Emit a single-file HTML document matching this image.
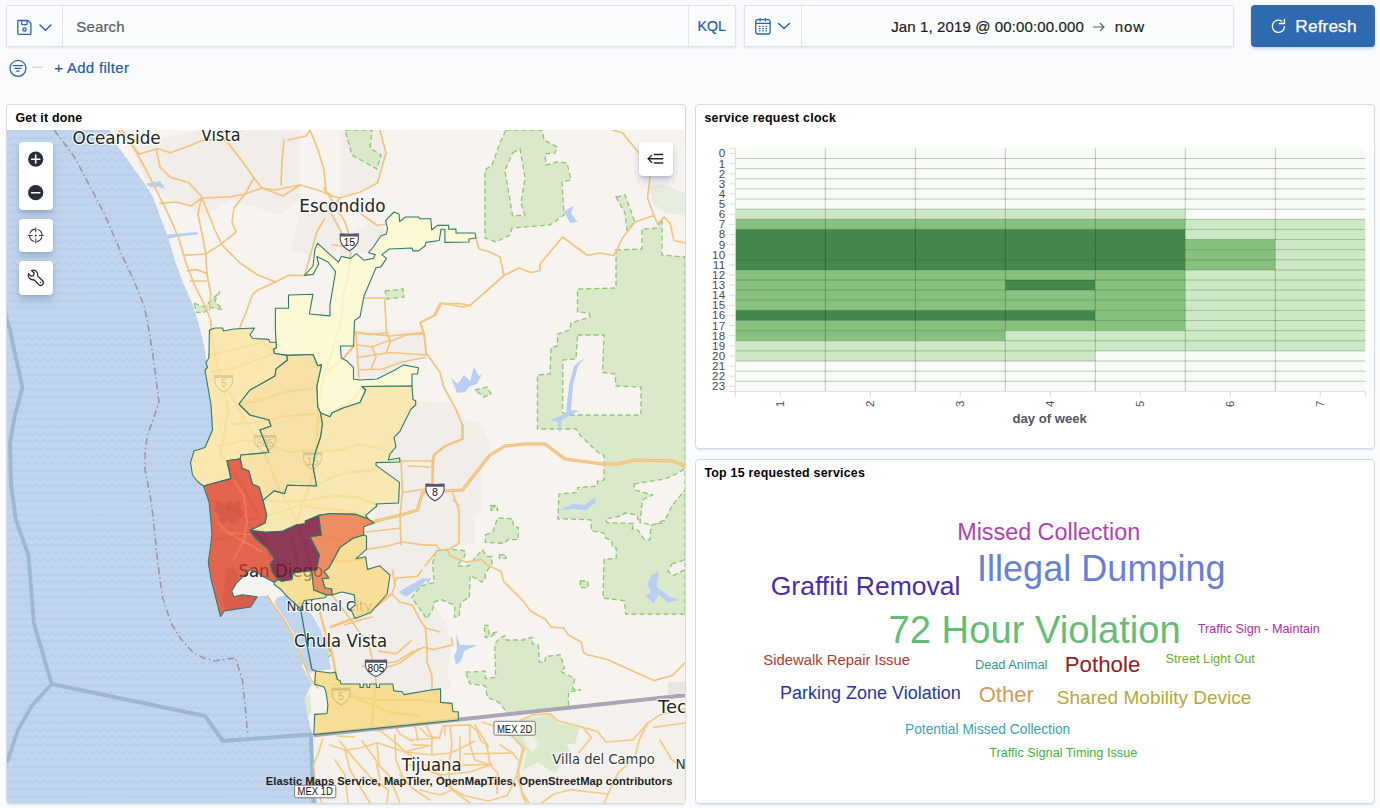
<!DOCTYPE html>
<html lang="en">
<head>
<meta charset="utf-8">
<title>Get it done - Dashboard</title>
<style>
*{box-sizing:border-box;margin:0;padding:0}
html,body{width:1380px;height:808px;overflow:hidden;background:#fafbfd;font-family:"Liberation Sans",Arial,sans-serif;color:#343741}
.abs{position:absolute}
.box{position:absolute;background:#fbfcfd;border:1px solid #dfe3ec;box-shadow:0 1px 2px rgba(152,162,179,.25)}
.panel{position:absolute;background:#fff;border:1px solid #d3dae6;border-radius:4px;box-shadow:0 2px 2px -1px rgba(152,162,179,.3)}
.ptitle{position:absolute;left:8.4px;top:5.6px;font-size:12.4px;font-weight:700;color:#000;white-space:nowrap}
.blue{color:#1a5ca8}
.heat{position:absolute;left:696px;top:104px}
.heat .yt{font-size:11.6px;fill:#444a59;letter-spacing:.3px}
.heat .xt{font-size:11.4px;fill:#4a5060}
.heat .xl{font-size:13.1px;font-weight:700;fill:#4e5568}
.cloud span{position:absolute;white-space:nowrap;line-height:1;font-family:"Liberation Sans",Arial,sans-serif}
.mapbtn{position:absolute;background:#fff;border-radius:4px;box-shadow:0 6px 12px -1px rgba(110,125,160,.28),0 3px 5px -1px rgba(110,125,160,.25),0 1px 2px rgba(110,125,160,.2)}
</style>
</head>
<body>

<!-- query bar -->
<div class="box" style="left:6px;top:5px;width:730px;height:42px"></div>
<div class="abs" style="left:62px;top:6px;width:1px;height:40px;background:#e3e7ef"></div>
<div class="abs" style="left:688px;top:6px;width:1px;height:40px;background:#e3e7ef"></div>
<svg class="abs" style="left:16px;top:18px" width="38" height="18" viewBox="0 0 38 18" fill="none" stroke="#2a66ad" stroke-width="1.3">
<path d="M1.8 3.4a.9.9 0 0 1 .9-.9h9.2l3 3v9.9a.9.9 0 0 1-.9.9H2.7a.9.9 0 0 1-.9-.9z" stroke-linejoin="round"/>
<path d="M5.6 2.7v3a.9.9 0 0 0 .9.9h3.7a.9.9 0 0 0 .9-.9v-3"/>
<circle cx="8.5" cy="11.4" r="1.6"/>
<path d="M24 7l5.5 5.2L35 7" stroke-width="1.5" stroke-linecap="round" stroke-linejoin="round"/>
</svg>
<div class="abs" style="left:76.3px;top:17.7px;font-size:15px;letter-spacing:.14px;color:#555b66;white-space:nowrap;-webkit-text-stroke:.2px #555b66">Search</div>
<div class="abs blue" style="left:697.5px;top:17.9px;font-size:14.2px;letter-spacing:0;white-space:nowrap;-webkit-text-stroke:.2px #1a5ca8">KQL</div>
<!-- date picker -->
<div class="box" style="left:744px;top:5px;width:490px;height:42px"></div>
<div class="abs" style="left:801px;top:6px;width:1px;height:40px;background:#e3e7ef"></div>
<svg class="abs" style="left:754px;top:16px" width="40" height="20" viewBox="0 0 40 20" fill="none" stroke="#2a66ad" stroke-width="1.3">
<rect x="1.8" y="3.6" width="14.3" height="14.4" rx="1.9"/>
<path d="M1.8 7.4h14.3M6.1 2.3v2.6M11.5 2.3v2.6" stroke-linecap="round"/>
<path d="M4.9 10.4h1.6M8.2 10.4h1.6M11.5 10.4h1.6M4.9 12.6h1.6M8.2 12.6h1.6M11.5 12.6h1.6M4.9 14.8h1.6M8.2 14.8h1.6M11.5 14.8h1.6" stroke-width="1.2"/>
<path d="M24.5 7.5l5.5 5 5.5-5" stroke-width="1.5" stroke-linecap="round" stroke-linejoin="round"/>
</svg>
<div class="abs" style="left:891.2px;top:17.6px;font-size:15px;letter-spacing:.12px;color:#1a1c21;white-space:nowrap;-webkit-text-stroke:.2px #1a1c21">Jan 1, 2019 @ 00:00:00.000</div>
<svg class="abs" style="left:1092px;top:21px" width="14" height="12" viewBox="0 0 14 12" fill="none" stroke="#5a606b" stroke-width="1.2" stroke-linecap="round" stroke-linejoin="round"><path d="M1.5 6h10.5M8.3 2.3L12 6l-3.7 3.7"/></svg>
<div class="abs" style="left:1114.7px;top:17.6px;font-size:15px;letter-spacing:.91px;color:#1a1c21;white-space:nowrap;-webkit-text-stroke:.2px #1a1c21">now</div>
<!-- refresh -->
<div class="abs" style="left:1250.5px;top:5px;width:124.5px;height:42px;background:#2f69b0;border-radius:4px;box-shadow:0 2px 3px rgba(47,105,176,.25)"></div>
<svg class="abs" style="left:1270px;top:17px" width="18" height="18" viewBox="0 0 18 18" fill="none" stroke="#fff" stroke-width="1.35" stroke-linecap="round" stroke-linejoin="round"><path d="M11.81 4.24A6.1 6.1 0 1 0 14.49 9.73"/><path d="M14.45 2.3V6.5H9.4"/></svg>
<div class="abs" style="left:1295.3px;top:15.6px;font-size:17.4px;letter-spacing:.06px;color:#fff;white-space:nowrap;-webkit-text-stroke:.25px #fff">Refresh</div>
<!-- filter row -->
<svg class="abs" style="left:8px;top:58px" width="40" height="20" viewBox="0 0 40 20" fill="none" stroke="#2a66ad" stroke-width="1.3" stroke-linecap="round"><circle cx="10" cy="10.3" r="8"/><path d="M5.3 7.6h9.4M7 10.4h6M8.8 13.2h2.4"/><path d="M25 9.3h9" stroke="#d6dae2" stroke-width="1.4"/></svg>
<div class="abs blue" style="left:54.2px;top:58.8px;font-size:15px;letter-spacing:.31px;white-space:nowrap;-webkit-text-stroke:.2px #1a5ca8">+ Add filter</div>

<!-- panels -->
<div class="panel" style="left:6px;top:104px;width:680px;height:700px"><div class="ptitle" style="letter-spacing:.2px">Get it done</div></div>
<div class="panel" style="left:695px;top:104px;width:680px;height:345px"><div class="ptitle" style="letter-spacing:.27px">service request clock</div></div>
<div class="panel" style="left:695px;top:459px;width:680px;height:345px"><div class="ptitle" style="letter-spacing:.24px">Top 15 requested services</div></div>

<svg class="abs" style="left:7px;top:130px" width="678" height="673" viewBox="7 130 678 673" font-family="'DejaVu Sans','Liberation Sans',sans-serif">
<defs>
<pattern id="wv" width="7.55" height="7.4" patternUnits="userSpaceOnUse" patternTransform="translate(2.3 1.2)"><path d="M-3.775 2.2q3.775 4.6 7.55 0q3.775 4.6 7.55 0" fill="none" stroke="#b5cbe7" stroke-width="1.4"/></pattern>
</defs>
<rect x="7" y="130" width="678" height="673" fill="#f7f4f0"/>
<polygon points="314.0,735.0 685.0,695.0 685.0,803.0 318.0,803.0" fill="#f4f1ed"/>
<polygon points="340.0,130.0 380.0,130.0 386.0,153.0 378.0,183.0 340.0,198.0 300.0,215.0 290.0,250.0 330.0,262.0 345.0,235.0 372.0,222.0 386.0,230.0 380.0,250.0 340.0,258.0" fill="#f1eeea"/>
<polygon points="356.0,330.0 425.0,330.0 426.0,355.0 402.0,365.0 380.0,377.0 356.0,377.0" fill="#f1eeea"/>
<polygon points="415.0,402.0 440.0,401.0 457.0,407.0 465.0,420.0 480.0,422.0 492.0,447.0 482.0,470.0 482.0,512.0 475.0,515.0 475.0,545.0 459.0,545.0 440.0,560.0 425.0,590.0 400.0,600.0 388.0,594.0 390.0,574.0 366.0,556.0 366.0,536.0 364.0,527.0 374.0,523.0 376.0,504.0 398.0,503.0 399.0,482.0 376.0,465.0 400.0,462.0 400.0,458.0 388.0,460.0 396.0,447.0 394.0,437.0 400.0,431.0 411.0,409.0" fill="#f1eeea"/>
<polygon points="313.0,610.0 330.0,595.0 355.0,595.0 352.0,609.0 356.0,618.0 370.0,613.0 388.0,594.0 430.0,600.0 446.0,622.0 452.0,650.0 447.0,672.0 452.0,688.0 404.0,694.0 393.0,684.0 340.0,684.0 336.0,674.0 331.0,669.0 327.0,658.0 320.0,630.0" fill="#f1eeea"/>
<polygon points="200.0,130.0 300.0,130.0 300.0,200.0 280.0,215.0 230.0,200.0 205.0,215.0 150.0,190.0 130.0,145.0" fill="#f1eeea"/>
<polygon points="650.0,185.5 662.5,184.0 685.0,193.0 685.0,215.5 665.0,213.0 652.5,203.0" fill="#e6eddf"/>
<polygon points="304.0,697.0 310.0,694.0 311.5,712.0 308.0,717.0 304.5,706.0" fill="#dcebcf"/>
<polygon points="345.0,130.0 372.0,130.0 370.0,148.0 381.0,155.0 377.0,169.0 352.0,155.0" fill="#d9e9ca" stroke="#90c476" stroke-width="1.3" stroke-dasharray="5 3"/>
<polygon points="506.0,130.0 542.0,130.0 544.0,140.0 557.0,147.0 555.0,153.0 545.0,154.0 546.0,165.0 557.0,162.0 567.0,163.0 571.0,180.0 562.0,182.0 564.0,215.0 550.0,225.0 512.0,228.0 510.0,235.0 496.0,242.0 485.0,238.0 485.0,170.0 492.0,165.0 500.0,143.0" fill="#d9e9ca" stroke="#90c476" stroke-width="1.3" stroke-dasharray="5 3"/>
<polygon points="616.0,197.0 625.0,195.0 635.0,222.0 627.0,230.0 625.0,213.0" fill="#d9e9ca" stroke="#90c476" stroke-width="1.3" stroke-dasharray="5 3"/>
<polygon points="616.0,250.0 642.0,249.0 642.0,229.0 657.0,228.0 662.0,219.0 662.0,255.0 685.0,257.0 685.0,614.0 625.6,614.0 624.7,600.8 603.0,598.0 604.0,559.3 616.2,558.4 616.2,548.0 612.5,547.0 611.5,540.5 605.0,537.7 604.0,533.0 591.7,531.0 590.8,519.8 557.8,518.8 559.0,494.0 577.5,492.5 577.5,487.5 597.5,486.0 597.5,481.0 604.0,480.0 604.0,455.0 600.0,454.0 590.0,445.0 580.0,435.0 576.0,429.0 537.5,429.0 537.5,375.0 550.0,374.0 551.0,347.5 557.5,346.0 557.5,334.0 570.0,330.0 571.0,323.0 590.0,317.0 589.0,313.0 577.5,312.0 577.5,289.0 616.0,288.0" fill="#d9e9ca" stroke="#90c476" stroke-width="1.3" stroke-dasharray="5 3"/>
<polygon points="475.0,390.0 487.0,387.0 491.0,394.0 484.0,397.0" fill="#d9e9ca" stroke="#90c476" stroke-width="1.3" stroke-dasharray="5 3"/>
<polygon points="385.0,291.0 403.0,289.0 404.0,297.0 387.0,299.0" fill="#d9e9ca" stroke="#90c476" stroke-width="1.3" stroke-dasharray="5 3"/>
<polygon points="485.3,534.9 492.8,532.0 497.5,517.9 512.6,518.8 513.5,526.4 518.3,527.3 518.3,539.6 507.9,539.6 504.1,543.3 485.3,542.4" fill="#d9e9ca" stroke="#90c476" stroke-width="1.3" stroke-dasharray="5 3"/>
<polygon points="491.0,505.7 497.5,505.7 497.5,510.4" fill="#d9e9ca" stroke="#90c476" stroke-width="1.3" stroke-dasharray="5 3"/>
<polygon points="499.4,554.6 506.0,554.6 506.0,558.4 499.4,558.4" fill="#d9e9ca" stroke="#90c476" stroke-width="1.3" stroke-dasharray="5 3"/>
<polygon points="436.3,550.9 449.5,549.0 465.5,550.9 464.6,556.5 457.0,566.0 468.3,566.0 470.2,564.0 477.8,554.6 482.5,550.0 487.2,556.5 491.9,556.5 491.9,564.0 485.3,573.5 485.3,579.0 481.5,582.0 470.2,575.4 469.3,598.0 466.4,598.9 460.8,602.7 458.9,616.8 454.2,616.8 455.0,605.5 442.0,599.8 434.4,601.7 432.5,609.3 426.9,618.7 411.7,597.7 421.0,586.0 434.3,582.6 432.5,564.0" fill="#d9e9ca" stroke="#90c476" stroke-width="1.3" stroke-dasharray="5 3"/>
<polygon points="580.4,581.0 588.0,581.0 588.0,587.6 580.4,587.6" fill="#d9e9ca" stroke="#90c476" stroke-width="1.3" stroke-dasharray="5 3"/>
<polygon points="484.3,625.3 488.0,625.3 489.0,633.8 497.5,631.9 491.0,636.6 485.3,637.5" fill="#d9e9ca" stroke="#90c476" stroke-width="1.3" stroke-dasharray="5 3"/>
<polygon points="465.6,672.2 485.3,671.2 485.3,678.5 495.7,677.4 494.7,644.0 499.9,638.0 505.0,635.6 506.0,640.0 523.9,640.0 524.8,638.5 532.4,637.5 532.4,644.0 538.4,645.0 539.4,661.8 544.6,662.9 545.6,656.6 560.2,654.6 564.4,668.0 560.2,671.2 574.8,678.5 572.7,688.9 581.0,690.0 568.5,692.0 568.5,707.2 508.2,713.8 498.8,702.4 487.4,697.2 485.3,685.8 469.7,683.7" fill="#d9e9ca" stroke="#90c476" stroke-width="1.3" stroke-dasharray="5 3"/>
<polygon points="491.0,506.0 494.0,506.0 494.0,510.0 491.0,510.0" fill="#d9e9ca" stroke="#90c476" stroke-width="1.3" stroke-dasharray="5 3"/>
<polygon points="326.0,640.0 331.0,655.0 327.0,658.0" fill="#d9e9ca" stroke="#90c476" stroke-width="1.3" stroke-dasharray="5 3"/>
<polygon points="194.0,303.0 204.3,307.0 220.0,291.6 214.7,300.7 222.5,309.8 209.5,307.0 204.3,312.4 196.5,312.4" fill="#d9e9ca" stroke="#90c476" stroke-width="1.3" stroke-dasharray="5 3"/>
<polygon points="512.5,153.0 520.0,149.0 525.0,178.0 521.0,203.0 525.0,215.5 512.5,215.5 505.0,170.5" fill="#f7f4f0" stroke="#90c476" stroke-width="1.3" stroke-dasharray="5 3"/>
<polygon points="577.5,335.0 604.0,335.0 602.5,372.5 615.0,374.0 616.0,386.0 641.0,387.0 641.0,415.0 570.0,415.0 562.5,412.5 563.0,360.0 576.0,359.0" fill="#f7f4f0" stroke="#90c476" stroke-width="1.3" stroke-dasharray="5 3"/>
<polygon points="644.5,500.0 671.8,500.0 669.9,509.4 664.3,511.3 664.3,522.6 651.0,524.5 650.0,539.6 644.5,539.6 637.9,530.0 632.2,529.0 634.0,523.5 606.8,522.6 605.9,518.8 621.0,516.0 624.7,513.0 637.0,515.0 637.9,519.8 641.7,518.8" fill="#f7f4f0" stroke="#90c476" stroke-width="1.3" stroke-dasharray="5 3"/>
<polygon points="634.0,484.0 665.0,479.0 676.0,474.0 685.0,469.0 685.0,490.0 672.5,505.0 665.0,520.0 652.5,525.0 640.0,522.5 642.5,500.0 652.5,495.0 635.0,490.0" fill="#f7f4f0" stroke="#90c476" stroke-width="1.3" stroke-dasharray="5 3"/>
<polygon points="671.8,564.0 685.0,560.0 685.0,569.7 673.7,575.4 668.0,571.6" fill="#f7f4f0" stroke="#90c476" stroke-width="1.3" stroke-dasharray="5 3"/>
<polygon points="519.6,720.0 549.8,714.9 558.1,723.2 580.0,727.4 574.8,744.0 566.4,744.0 570.6,752.3 555.0,773.0 537.3,762.7 522.8,770.0 526.9,752.3 514.4,737.8" fill="#dbeacd"/>
<polygon points="522.0,738.0 530.0,734.0 540.0,744.0 532.0,752.0" fill="#f1efe8"/>
<polygon points="451.0,378.0 458.0,384.0 464.0,375.0 470.0,381.0 474.0,367.0 479.0,376.0 482.0,374.0 477.0,384.0 470.0,386.0 465.0,392.0 457.0,393.0" fill="#b7cff2"/>
<polygon points="585.0,357.5 578.0,366.0 573.0,385.0 571.0,410.0 580.0,411.0 572.0,414.0 562.0,420.0 560.0,435.0 558.0,422.0 550.0,420.0 558.0,417.0 566.0,413.0 569.0,385.0 574.0,366.0" fill="#b7cff2"/>
<polygon points="560.0,510.0 573.0,504.0 585.0,505.0 595.0,497.5 596.0,502.0 586.0,510.0 572.0,509.0" fill="#b7cff2"/>
<polygon points="563.7,211.7 573.7,205.5 571.0,213.0 577.5,221.7 570.0,223.0 566.0,215.5" fill="#b7cff2"/>
<polygon points="398.5,592.0 423.0,578.0 426.8,578.8 419.3,588.0 406.0,596.7" fill="#b7cff2"/>
<polygon points="456.0,633.8 459.9,645.0 477.8,645.0 464.6,650.7 461.0,661.0 456.0,665.0 454.0,656.0 457.0,650.0" fill="#b7cff2"/>
<polygon points="651.0,575.4 658.6,571.6 656.7,586.7 668.0,596.0 679.3,599.8 668.0,602.7 658.6,594.2 653.9,603.6 645.4,596.0 651.0,592.3 647.3,584.8" fill="#b7cff2"/>
<polygon points="145.8,183.8 160.0,181.0 165.3,189.0 158.0,186.5 150.0,187.0" fill="#b7cff2"/>
<polygon points="166.6,234.5 197.8,232.0 197.8,234.5 175.7,237.0 168.0,239.0" fill="#b7cff2"/>
<polygon points="425.0,579.0 431.0,578.0 428.0,584.0" fill="#b7cff2"/>
<polygon points="109.5,130.0 116.0,143.6 129.0,161.8 142.0,180.0 152.3,195.5 160.0,216.3 168.0,237.0 175.7,263.0 183.5,283.8 192.6,304.6 199.0,325.4 201.0,333.0 205.0,350.0 207.5,367.5 205.0,370.0 208.0,388.0 211.0,405.0 213.0,420.0 212.5,430.0 209.0,441.0 205.0,447.5 194.0,451.0 191.0,457.0 190.5,462.5 191.0,470.0 192.5,475.0 198.0,482.0 204.0,487.5 207.0,495.0 209.2,502.2 212.0,520.0 212.0,534.2 209.0,550.0 208.3,562.5 211.0,578.8 215.0,596.0 218.6,609.0 220.5,616.5 224.3,610.9 250.6,607.0 257.2,596.7 262.0,596.0 267.6,595.8 272.3,603.3 285.5,622.0 296.8,643.0 302.5,656.0 302.5,667.0 311.9,684.0 304.3,699.0 308.0,718.0 311.9,733.0 313.8,772.8 317.5,803.0 7.0,803.0 7.0,130.0" fill="#c1d5ee"/>
<polygon points="109.5,130.0 116.0,143.6 129.0,161.8 142.0,180.0 152.3,195.5 160.0,216.3 168.0,237.0 175.7,263.0 183.5,283.8 192.6,304.6 199.0,325.4 201.0,333.0 205.0,350.0 207.5,367.5 205.0,370.0 208.0,388.0 211.0,405.0 213.0,420.0 212.5,430.0 209.0,441.0 205.0,447.5 194.0,451.0 191.0,457.0 190.5,462.5 191.0,470.0 192.5,475.0 198.0,482.0 204.0,487.5 207.0,495.0 209.2,502.2 212.0,520.0 212.0,534.2 209.0,550.0 208.3,562.5 211.0,578.8 215.0,596.0 218.6,609.0 220.5,616.5 224.3,610.9 250.6,607.0 257.2,596.7 262.0,596.0 267.6,595.8 272.3,603.3 285.5,622.0 296.8,643.0 302.5,656.0 302.5,667.0 311.9,684.0 304.3,699.0 308.0,718.0 311.9,733.0 313.8,772.8 317.5,803.0 7.0,803.0 7.0,130.0" fill="url(#wv)"/>
<polygon points="277.0,597.5 285.5,594.9 298.0,606.0 311.9,614.6 320.4,629.7 325.0,643.0 328.8,658.0 330.7,669.3 315.6,671.0 310.0,673.0 304.3,665.5 298.7,643.0 287.4,622.0 274.2,603.0" fill="#c1d5ee"/>
<path d="M54.0 130.0 L64.0 143.0 L75.0 158.0 L90.0 186.4 L105.6 216.3 L121.0 252.7 L134.0 281.0 L144.5 307.0 L149.5 333.0 L154.0 362.5 L159.0 402.5 L153.0 420.0 L147.5 435.0 L145.0 452.0 L145.0 470.0 L151.0 500.0 L153.4 520.0 L157.0 555.7 L162.3 596.7 L171.2 623.4 L181.0 639.0 L192.6 652.0 L204.0 658.0 L214.0 660.9 L235.4 658.0 L239.0 669.0 L242.5 680.5 L245.0 705.0 L247.9 735.8" fill="none" stroke="#9d94a1" stroke-width="1.5" stroke-dasharray="7 3 1.5 3"/>
<path d="M3.0 300.0 L6.7 319.0 L10.0 330.0 L16.0 358.0 L22.5 387.5 L15.0 415.0 L10.0 442.5 L11.0 485.0 L16.0 520.0 L28.5 555.7 L33.9 623.4 L51.7 684.0 L32.0 705.5 L17.8 730.4 L7.0 762.5" fill="none" stroke="#9db8d3" stroke-width="3.8" stroke-linejoin="round"/>
<path d="M51.7 684.0 L205.0 716.0 L222.9 741.0 L311.0 734.5 L313.5 803.0" fill="none" stroke="#9db8d3" stroke-width="4" stroke-linejoin="round"/>
<path d="M122.0 130.0 L131.5 143.6 L144.5 167.0 L155.0 187.7 L168.0 213.7 L178.3 237.0 L186.0 263.0 L194.0 283.8 L204.3 304.6 L210.8 320.0 L211.5 338.0" fill="none" stroke="#f2c47f" stroke-width="1.7" stroke-linejoin="round" stroke-linecap="round"/>
<path d="M118.0 130.0 L139.4 154.0 L157.5 148.8 L170.5 152.7 L188.7 146.0 L204.3 139.7 L230.0 141.0 L240.0 131.0" fill="none" stroke="#f2c47f" stroke-width="1.7" stroke-linejoin="round" stroke-linecap="round"/>
<path d="M156.2 148.8 L160.0 167.0 L170.5 177.4 L188.7 182.5 L201.7 196.8 L208.0 213.0 L215.0 230.0 L222.0 245.0 L240.0 263.0 L258.0 275.0 L275.4 282.0 L288.5 275.4 L304.6 275.4 L316.8 232.0 L324.3 218.8" fill="none" stroke="#f2c47f" stroke-width="1.7" stroke-linejoin="round" stroke-linecap="round"/>
<path d="M160.0 203.3 L175.7 202.0 L191.3 206.0 L201.7 198.0 L230.0 196.8 L245.0 194.0 L262.0 188.0 L275.0 190.0 L300.0 185.0 L318.0 190.0 L332.0 196.0 L340.0 198.0" fill="none" stroke="#f2c47f" stroke-width="1.7" stroke-linejoin="round" stroke-linecap="round"/>
<path d="M222.0 135.0 L232.0 148.0 L245.0 165.0 L254.0 178.0 L262.0 188.0 L283.0 196.0 L300.0 185.0" fill="none" stroke="#f2c47f" stroke-width="1.7" stroke-linejoin="round" stroke-linecap="round"/>
<path d="M310.0 130.0 L318.0 150.0 L324.0 170.0 L326.0 192.0 L332.0 196.0" fill="none" stroke="#f2c47f" stroke-width="1.7" stroke-linejoin="round" stroke-linecap="round"/>
<path d="M254.0 178.0 L245.0 194.0 L234.0 208.0 L232.0 222.0 L236.0 232.0 L230.0 237.0 L220.0 244.9 L205.6 254.0 L183.5 255.3" fill="none" stroke="#f2c47f" stroke-width="1.7" stroke-linejoin="round" stroke-linecap="round"/>
<path d="M284.0 140.0 L282.0 160.0 L281.0 185.0" fill="none" stroke="#f2c47f" stroke-width="1.7" stroke-linejoin="round" stroke-linecap="round"/>
<path d="M288.0 140.0 L306.0 136.0 L310.0 130.0" fill="none" stroke="#f2c47f" stroke-width="1.7" stroke-linejoin="round" stroke-linecap="round"/>
<path d="M201.7 198.0 L197.8 213.7 L201.7 232.0 L205.6 252.7 L206.9 273.5 L210.8 294.0 L209.5 309.8" fill="none" stroke="#f2c47f" stroke-width="1.7" stroke-linejoin="round" stroke-linecap="round"/>
<path d="M187.4 270.9 L196.5 269.6 L206.9 273.5" fill="none" stroke="#f2c47f" stroke-width="1.7" stroke-linejoin="round" stroke-linecap="round"/>
<path d="M190.0 281.0 L206.9 281.0" fill="none" stroke="#f2c47f" stroke-width="1.7" stroke-linejoin="round" stroke-linecap="round"/>
<path d="M239.6 328.0 L245.0 315.0 L252.7 294.2 L258.0 290.0 L275.4 282.0" fill="none" stroke="#f2c47f" stroke-width="1.7" stroke-linejoin="round" stroke-linecap="round"/>
<path d="M380.0 130.0 L386.0 153.0 L377.5 183.0 L360.0 192.0 L340.0 198.0 L330.0 211.3 L341.3 232.0 L350.7 252.7 L348.8 275.4 L343.2 294.2 L341.3 320.6 L331.9 352.0" fill="none" stroke="#f2c47f" stroke-width="1.7" stroke-linejoin="round" stroke-linecap="round"/>
<path d="M324.0 188.0 L335.0 205.0 L345.0 222.0 L350.7 240.0" fill="none" stroke="#f2c47f" stroke-width="1.7" stroke-linejoin="round" stroke-linecap="round"/>
<path d="M361.0 214.0 L377.5 225.5 L386.0 224.0" fill="none" stroke="#f2c47f" stroke-width="1.7" stroke-linejoin="round" stroke-linecap="round"/>
<path d="M332.0 245.0 L343.0 246.0 L356.0 243.0" fill="none" stroke="#f2c47f" stroke-width="1.7" stroke-linejoin="round" stroke-linecap="round"/>
<path d="M364.0 298.0 L384.6 298.0 L386.5 331.9 L390.3 341.3 L386.5 352.0" fill="none" stroke="#f2c47f" stroke-width="1.7" stroke-linejoin="round" stroke-linecap="round"/>
<path d="M354.5 331.9 L369.6 334.7 L386.5 333.0" fill="none" stroke="#f2c47f" stroke-width="1.7" stroke-linejoin="round" stroke-linecap="round"/>
<path d="M390.3 341.3 L407.2 334.7 L424.2 333.8 L420.4 322.5 L435.5 315.0 L441.2 303.6 L460.0 303.6 L470.0 305.5 L504.0 275.5" fill="none" stroke="#f2c47f" stroke-width="1.7" stroke-linejoin="round" stroke-linecap="round"/>
<path d="M424.2 333.8 L426.0 352.0 L426.0 355.0" fill="none" stroke="#f2c47f" stroke-width="1.7" stroke-linejoin="round" stroke-linecap="round"/>
<path d="M476.0 238.0 L479.0 249.0 L490.0 252.0 L500.0 257.0 L504.0 275.5 L519.0 268.0 L531.0 272.5 L540.0 270.5 L540.0 264.0 L562.5 237.0 L587.5 255.5 L600.0 253.0 L614.0 255.5 L622.5 238.0 L635.0 222.0 L654.0 215.5 L657.5 224.0 L664.0 217.0 L670.0 223.0 L674.0 240.5 L685.0 243.0" fill="none" stroke="#f2c47f" stroke-width="1.7" stroke-linejoin="round" stroke-linecap="round"/>
<path d="M470.0 305.5 L462.5 307.0 L440.0 303.0 L434.0 315.5 L420.0 323.0 L422.5 330.0 L425.0 340.0 L426.0 352.5 L440.0 372.5 L444.0 387.5 L455.0 407.5 L462.5 425.0 L462.5 439.0 L445.0 446.0 L434.0 455.0 L432.5 485.0" fill="none" stroke="#f2c47f" stroke-width="1.7" stroke-linejoin="round" stroke-linecap="round"/>
<path d="M612.5 130.0 L622.5 133.0 L639.0 153.0 L650.0 177.0 L647.5 198.0 L654.0 215.5" fill="none" stroke="#f2c47f" stroke-width="1.7" stroke-linejoin="round" stroke-linecap="round"/>
<path d="M356.0 332.5 L390.0 336.0 L422.5 332.5" fill="none" stroke="#f2c47f" stroke-width="1.7" stroke-linejoin="round" stroke-linecap="round"/>
<path d="M357.5 345.0 L372.0 347.0 L390.0 340.0" fill="none" stroke="#f2c47f" stroke-width="1.7" stroke-linejoin="round" stroke-linecap="round"/>
<path d="M357.5 357.5 L390.0 352.5 L426.0 355.0" fill="none" stroke="#f2c47f" stroke-width="1.7" stroke-linejoin="round" stroke-linecap="round"/>
<path d="M359.0 370.0 L382.5 369.0 L402.0 362.0 L425.0 357.5" fill="none" stroke="#f2c47f" stroke-width="1.7" stroke-linejoin="round" stroke-linecap="round"/>
<path d="M356.0 332.5 L357.5 357.5 L359.0 377.5" fill="none" stroke="#f2c47f" stroke-width="1.7" stroke-linejoin="round" stroke-linecap="round"/>
<path d="M372.0 347.0 L376.0 357.0 L371.0 369.0" fill="none" stroke="#f2c47f" stroke-width="1.7" stroke-linejoin="round" stroke-linecap="round"/>
<path d="M401.0 460.0 L402.5 492.5 L400.0 515.0 L401.0 545.0" fill="none" stroke="#f2c47f" stroke-width="1.7" stroke-linejoin="round" stroke-linecap="round"/>
<path d="M401.0 461.0 L432.5 461.0" fill="none" stroke="#f2c47f" stroke-width="1.7" stroke-linejoin="round" stroke-linecap="round"/>
<path d="M408.0 466.0 L430.0 467.0" fill="none" stroke="#f2c47f" stroke-width="1.7" stroke-linejoin="round" stroke-linecap="round"/>
<path d="M402.5 492.5 L426.0 489.0 L444.0 491.0" fill="none" stroke="#f2c47f" stroke-width="1.7" stroke-linejoin="round" stroke-linecap="round"/>
<path d="M422.5 492.5 L417.5 510.0 L400.0 515.0 L372.5 522.5" fill="none" stroke="#f2c47f" stroke-width="1.7" stroke-linejoin="round" stroke-linecap="round"/>
<path d="M452.5 492.5 L459.0 510.0 L459.0 543.3 L447.6 550.0" fill="none" stroke="#f2c47f" stroke-width="1.7" stroke-linejoin="round" stroke-linecap="round"/>
<path d="M453.3 500.0 L458.9 505.7" fill="none" stroke="#f2c47f" stroke-width="1.7" stroke-linejoin="round" stroke-linecap="round"/>
<path d="M366.0 532.0 L385.0 530.0 L401.0 528.0" fill="none" stroke="#f2c47f" stroke-width="1.7" stroke-linejoin="round" stroke-linecap="round"/>
<path d="M374.0 523.0 L388.0 518.0 L401.0 515.0" fill="none" stroke="#f2c47f" stroke-width="1.7" stroke-linejoin="round" stroke-linecap="round"/>
<path d="M366.5 549.3 L388.0 546.0 L402.0 542.0 L425.0 545.2 L436.3 545.2 L440.0 550.0 L447.6 550.0 L449.5 555.6 L466.4 562.2 L481.5 559.3 L487.2 565.0 L501.3 571.6 L503.2 581.0 L523.0 600.8 L530.5 611.0 L545.6 619.6 L551.2 627.2 L563.5 628.0 L568.2 634.7 L581.4 642.2 L583.2 652.0 L587.2 654.6 L608.0 659.8 L633.0 671.2 L653.8 680.6 L672.5 675.4 L685.0 662.9" fill="none" stroke="#f2c47f" stroke-width="1.7" stroke-linejoin="round" stroke-linecap="round"/>
<path d="M425.0 566.0 L436.3 551.8" fill="none" stroke="#f2c47f" stroke-width="1.7" stroke-linejoin="round" stroke-linecap="round"/>
<path d="M392.5 570.0 L395.0 586.0 L391.7 594.0 L399.7 602.0 L412.6 605.4 L419.0 618.0 L425.5 628.0 L427.0 647.0 L427.0 661.7 L432.0 676.0 L432.0 689.0" fill="none" stroke="#f2c47f" stroke-width="1.7" stroke-linejoin="round" stroke-linecap="round"/>
<path d="M395.0 582.0 L396.5 578.0 L417.4 576.4 L422.0 570.0" fill="none" stroke="#f2c47f" stroke-width="1.7" stroke-linejoin="round" stroke-linecap="round"/>
<path d="M425.5 628.0 L440.0 632.0" fill="none" stroke="#f2c47f" stroke-width="1.7" stroke-linejoin="round" stroke-linecap="round"/>
<path d="M331.0 594.0 L345.0 612.0 L358.0 630.0 L369.8 648.0 L374.0 668.0 L376.2 683.5" fill="none" stroke="#f2c47f" stroke-width="1.7" stroke-linejoin="round" stroke-linecap="round"/>
<path d="M345.0 625.0 L360.0 620.0 L372.0 617.0" fill="none" stroke="#f2c47f" stroke-width="1.7" stroke-linejoin="round" stroke-linecap="round"/>
<path d="M378.8 651.2 L396.5 653.6 L411.0 640.8" fill="none" stroke="#f2c47f" stroke-width="1.7" stroke-linejoin="round" stroke-linecap="round"/>
<path d="M382.8 663.3 L396.5 661.7 L409.4 653.6 L423.9 647.2 L433.5 649.6 L452.8 644.8 L451.2 637.6" fill="none" stroke="#f2c47f" stroke-width="1.7" stroke-linejoin="round" stroke-linecap="round"/>
<path d="M386.9 667.3 L399.7 663.3 L419.0 648.8" fill="none" stroke="#f2c47f" stroke-width="1.7" stroke-linejoin="round" stroke-linecap="round"/>
<path d="M362.0 666.0 L372.0 668.0" fill="none" stroke="#f2c47f" stroke-width="1.7" stroke-linejoin="round" stroke-linecap="round"/>
<path d="M285.5 622.0 L296.8 643.0 L302.5 660.0 L311.0 680.0 L318.0 688.0" fill="none" stroke="#f2c47f" stroke-width="1.7" stroke-linejoin="round" stroke-linecap="round"/>
<path d="M267.6 595.8 L272.3 603.3 L285.5 622.0" fill="none" stroke="#f2c47f" stroke-width="1.7" stroke-linejoin="round" stroke-linecap="round"/>
<path d="M432.4 690.0 L440.0 700.0" fill="none" stroke="#f2c47f" stroke-width="1.7" stroke-linejoin="round" stroke-linecap="round"/>
<path d="M366.0 523.0 L380.0 520.0 L401.0 515.0 L417.5 510.0 L422.5 492.5 L432.5 491.0 L444.0 491.0 L462.5 490.0 L490.0 455.0 L505.0 446.0 L525.0 444.0 L545.0 444.0 L565.0 459.0 L602.5 464.0 L617.5 464.0 L635.0 460.0 L672.5 461.0 L685.0 466.0" fill="none" stroke="#efb96e" stroke-width="3" stroke-linejoin="round" stroke-linecap="round"/>
<path d="M366.0 523.0 L380.0 520.0 L401.0 515.0 L417.5 510.0 L422.5 492.5 L432.5 491.0 L444.0 491.0 L462.5 490.0 L490.0 455.0 L505.0 446.0 L525.0 444.0 L545.0 444.0 L565.0 459.0 L602.5 464.0 L617.5 464.0 L635.0 460.0 L672.5 461.0 L685.0 466.0" fill="none" stroke="#f7cf92" stroke-width="1.5" stroke-linejoin="round" stroke-linecap="round"/>
<path d="M391.7 594.0 L377.2 605.4 L354.7 618.0 L330.6 627.0" fill="none" stroke="#f2c47f" stroke-width="2.6" stroke-linejoin="round" stroke-linecap="round"/>
<path d="M319.3 610.0 L325.7 634.3 L332.2 653.6 L337.0 679.4" fill="none" stroke="#f2c47f" stroke-width="2.3" stroke-linejoin="round" stroke-linecap="round"/>
<path d="M432.5 485.0 L432.5 461.0 L434.0 455.0 L445.0 446.0 L462.5 439.0 L462.5 425.0" fill="none" stroke="#f2c47f" stroke-width="2.4" stroke-linejoin="round" stroke-linecap="round"/>
<path d="M211.0 330.0 L214.0 350.0 L218.0 370.0 L224.0 384.0 L232.0 398.0 L243.0 416.0 L252.0 432.0 L262.0 448.0 L270.0 466.0 L280.0 490.0 L292.0 510.0 L300.0 530.0 L306.0 548.0 L312.0 570.0" fill="none" stroke="#f2c47f" stroke-width="2.3" stroke-linejoin="round" stroke-linecap="round"/>
<path d="M224.0 384.0 L228.0 410.0 L224.0 435.0 L220.0 452.0 L232.0 470.0 L245.0 490.0 L258.0 515.0 L266.0 540.0 L270.0 560.0 L276.0 580.0" fill="none" stroke="#f2c47f" stroke-width="2.3" stroke-linejoin="round" stroke-linecap="round"/>
<path d="M331.9 352.0 L325.0 372.0 L320.0 395.0 L318.0 420.0 L316.0 450.0 L314.0 470.0 L308.0 490.0 L302.0 505.0 L298.0 520.0" fill="none" stroke="#f2c47f" stroke-width="2.3" stroke-linejoin="round" stroke-linecap="round"/>
<path d="M209.0 355.0 L240.0 348.0 L262.0 342.0 L275.0 352.0" fill="none" stroke="#f2c47f" stroke-width="2.3" stroke-linejoin="round" stroke-linecap="round"/>
<path d="M212.0 372.0 L235.0 368.0 L262.0 358.0 L280.0 350.0" fill="none" stroke="#f2c47f" stroke-width="2.3" stroke-linejoin="round" stroke-linecap="round"/>
<path d="M240.0 404.0 L262.0 400.0 L285.0 392.0 L312.0 388.0" fill="none" stroke="#f2c47f" stroke-width="2.3" stroke-linejoin="round" stroke-linecap="round"/>
<path d="M232.0 424.0 L260.0 422.0 L285.0 416.0 L314.0 414.0" fill="none" stroke="#f2c47f" stroke-width="2.3" stroke-linejoin="round" stroke-linecap="round"/>
<path d="M218.0 446.0 L245.0 440.0 L268.0 445.0 L290.0 452.0 L314.0 450.0" fill="none" stroke="#f2c47f" stroke-width="2.3" stroke-linejoin="round" stroke-linecap="round"/>
<path d="M263.0 500.0 L285.0 502.0 L310.0 500.0 L335.0 495.0 L360.0 498.0 L376.0 504.0" fill="none" stroke="#f2c47f" stroke-width="2.3" stroke-linejoin="round" stroke-linecap="round"/>
<path d="M316.0 452.0 L340.0 450.0 L360.0 444.0 L378.0 448.0 L392.0 452.0" fill="none" stroke="#f2c47f" stroke-width="2.3" stroke-linejoin="round" stroke-linecap="round"/>
<path d="M250.0 520.0 L280.0 512.0 L300.0 505.0 L318.0 508.0 L340.0 510.0 L366.0 515.0" fill="none" stroke="#f2c47f" stroke-width="2.3" stroke-linejoin="round" stroke-linecap="round"/>
<path d="M316.0 486.0 L330.0 478.0 L350.0 472.0 L376.0 470.0" fill="none" stroke="#f2c47f" stroke-width="2.3" stroke-linejoin="round" stroke-linecap="round"/>
<path d="M325.0 372.0 L340.0 362.0 L354.0 346.0" fill="none" stroke="#f2c47f" stroke-width="2.3" stroke-linejoin="round" stroke-linecap="round"/>
<path d="M318.0 420.0 L335.0 410.0 L352.0 400.0 L362.0 388.0" fill="none" stroke="#f2c47f" stroke-width="2.3" stroke-linejoin="round" stroke-linecap="round"/>
<path d="M212.0 500.0 L235.0 510.0 L250.0 525.0 L262.0 540.0 L272.0 556.0" fill="none" stroke="#f2c47f" stroke-width="2.3" stroke-linejoin="round" stroke-linecap="round"/>
<path d="M215.0 540.0 L240.0 535.0 L260.0 530.0" fill="none" stroke="#f2c47f" stroke-width="2.3" stroke-linejoin="round" stroke-linecap="round"/>
<path d="M292.0 535.0 L296.0 555.0 L298.0 572.0" fill="none" stroke="#f2c47f" stroke-width="2.3" stroke-linejoin="round" stroke-linecap="round"/>
<path d="M322.0 535.0 L340.0 540.0 L356.0 538.0" fill="none" stroke="#f2c47f" stroke-width="2.3" stroke-linejoin="round" stroke-linecap="round"/>
<path d="M330.0 560.0 L345.0 562.0 L366.0 558.0" fill="none" stroke="#f2c47f" stroke-width="2.3" stroke-linejoin="round" stroke-linecap="round"/>
<path d="M335.0 684.0 L360.0 700.0 L390.0 712.0 L420.0 716.0" fill="none" stroke="#f2c47f" stroke-width="2.3" stroke-linejoin="round" stroke-linecap="round"/>
<path d="M345.0 696.0 L380.0 700.0 L420.0 700.0 L440.0 702.0" fill="none" stroke="#f2c47f" stroke-width="2.3" stroke-linejoin="round" stroke-linecap="round"/>
<path d="M376.2 683.5 L374.0 700.0 L372.8 719.0 L371.0 728.0" fill="none" stroke="#f2c47f" stroke-width="2.3" stroke-linejoin="round" stroke-linecap="round"/>
<path d="M322.6 739.0 L318.8 752.0 L313.5 765.0 L316.0 785.0 L322.0 803.0" fill="none" stroke="#f4cb86" stroke-width="1.7" stroke-linejoin="round" stroke-linecap="round"/>
<path d="M337.7 736.0 L354.6 737.0" fill="none" stroke="#f4cb86" stroke-width="1.7" stroke-linejoin="round" stroke-linecap="round"/>
<path d="M339.6 741.0 L356.5 761.6 L371.6 778.5 L388.5 790.0 L386.7 803.0" fill="none" stroke="#f4cb86" stroke-width="1.7" stroke-linejoin="round" stroke-linecap="round"/>
<path d="M377.2 742.7 L388.5 746.5 L405.5 752.0 L431.9 755.0 L450.7 753.0 L460.0 748.4 L475.0 741.0" fill="none" stroke="#f4cb86" stroke-width="1.7" stroke-linejoin="round" stroke-linecap="round"/>
<path d="M381.0 731.4 L398.0 744.6 L405.5 752.0 L420.0 762.0 L440.0 775.0 L452.0 790.0 L470.0 803.0" fill="none" stroke="#f4cb86" stroke-width="1.7" stroke-linejoin="round" stroke-linecap="round"/>
<path d="M409.3 740.0 L439.4 738.0 L443.0 725.8 L469.6 724.9 L477.0 730.5 L480.9 740.9 L486.5 744.6 L488.4 754.0 L490.0 765.0 L497.8 773.0 L496.9 793.6" fill="none" stroke="#f4cb86" stroke-width="1.7" stroke-linejoin="round" stroke-linecap="round"/>
<path d="M463.9 754.0 L512.9 753.0" fill="none" stroke="#f4cb86" stroke-width="1.7" stroke-linejoin="round" stroke-linecap="round"/>
<path d="M377.2 744.6 L379.0 765.4 L388.5 774.8 L394.0 788.0 L400.0 803.0" fill="none" stroke="#f4cb86" stroke-width="1.7" stroke-linejoin="round" stroke-linecap="round"/>
<path d="M512.9 737.0 L524.2 748.4 L518.5 771.0 L522.3 795.5 L526.0 803.0" fill="none" stroke="#f4cb86" stroke-width="1.7" stroke-linejoin="round" stroke-linecap="round"/>
<path d="M450.7 788.0 L463.9 795.5 L488.4 801.0 L507.2 795.5 L511.0 788.0 L518.5 771.0" fill="none" stroke="#f4cb86" stroke-width="1.7" stroke-linejoin="round" stroke-linecap="round"/>
<path d="M460.0 737.0 L460.0 765.4 L492.0 764.4" fill="none" stroke="#f4cb86" stroke-width="1.7" stroke-linejoin="round" stroke-linecap="round"/>
<path d="M431.9 737.0 L431.9 754.0" fill="none" stroke="#f4cb86" stroke-width="1.7" stroke-linejoin="round" stroke-linecap="round"/>
<path d="M413.0 744.6 L430.0 745.6" fill="none" stroke="#f4cb86" stroke-width="1.7" stroke-linejoin="round" stroke-linecap="round"/>
<path d="M445.0 725.8 L445.0 735.0" fill="none" stroke="#f4cb86" stroke-width="1.7" stroke-linejoin="round" stroke-linecap="round"/>
<path d="M475.0 724.9 L488.4 746.5" fill="none" stroke="#f4cb86" stroke-width="1.7" stroke-linejoin="round" stroke-linecap="round"/>
<path d="M392.0 722.0 L400.0 734.0 L412.0 741.0" fill="none" stroke="#f4cb86" stroke-width="1.7" stroke-linejoin="round" stroke-linecap="round"/>
<path d="M420.0 728.0 L428.0 736.0 L440.0 738.0" fill="none" stroke="#f4cb86" stroke-width="1.7" stroke-linejoin="round" stroke-linecap="round"/>
<path d="M362.0 741.0 L376.0 760.0 L380.0 780.0" fill="none" stroke="#f4cb86" stroke-width="1.7" stroke-linejoin="round" stroke-linecap="round"/>
<path d="M440.0 775.0 L470.0 772.0 L490.0 765.0" fill="none" stroke="#f4cb86" stroke-width="1.7" stroke-linejoin="round" stroke-linecap="round"/>
<path d="M400.0 775.0 L412.0 788.0 L430.0 800.0" fill="none" stroke="#f4cb86" stroke-width="1.7" stroke-linejoin="round" stroke-linecap="round"/>
<path d="M520.7 720.0 L533.0 714.9 L549.8 713.8 L558.0 721.0 L583.0 727.4 L597.6 731.5 L606.0 742.0 L633.0 739.8 L647.5 723.2 L660.0 714.9 L685.0 708.6" fill="none" stroke="#f4cb86" stroke-width="1.7" stroke-linejoin="round" stroke-linecap="round"/>
<path d="M583.0 727.4 L591.4 737.8 L579.0 752.3" fill="none" stroke="#f4cb86" stroke-width="1.7" stroke-linejoin="round" stroke-linecap="round"/>
<path d="M647.5 723.2 L639.2 739.8 L635.0 756.5 L618.4 773.0 L608.0 794.0 L604.0 803.0" fill="none" stroke="#f4cb86" stroke-width="1.7" stroke-linejoin="round" stroke-linecap="round"/>
<path d="M685.0 723.0 L653.8 727.4" fill="none" stroke="#f4cb86" stroke-width="1.7" stroke-linejoin="round" stroke-linecap="round"/>
<path d="M512.4 735.7 L522.8 748.0 L516.5 775.0 L522.8 794.0 L529.0 803.0" fill="none" stroke="#f4cb86" stroke-width="1.7" stroke-linejoin="round" stroke-linecap="round"/>
<path d="M608.0 794.0 L570.6 789.8 L554.0 794.0 L541.5 803.0" fill="none" stroke="#f4cb86" stroke-width="1.7" stroke-linejoin="round" stroke-linecap="round"/>
<path d="M494.0 722.0 L512.4 735.7" fill="none" stroke="#f4cb86" stroke-width="1.7" stroke-linejoin="round" stroke-linecap="round"/>
<path d="M660.0 740.0 L672.0 760.0 L685.0 770.0" fill="none" stroke="#f4cb86" stroke-width="1.7" stroke-linejoin="round" stroke-linecap="round"/>
<path d="M330.0 745.0 L345.0 750.0 L360.0 748.0 L377.0 743.0" fill="none" stroke="#f4cb86" stroke-width="1.7" stroke-linejoin="round" stroke-linecap="round"/>
<path d="M345.0 750.0 L350.0 770.0 L362.0 790.0 L370.0 803.0" fill="none" stroke="#f4cb86" stroke-width="1.7" stroke-linejoin="round" stroke-linecap="round"/>
<path d="M395.0 735.0 L396.0 760.0 L404.0 780.0" fill="none" stroke="#f4cb86" stroke-width="1.7" stroke-linejoin="round" stroke-linecap="round"/>
<path d="M404.0 752.0 L420.0 748.0 L431.9 745.0" fill="none" stroke="#f4cb86" stroke-width="1.7" stroke-linejoin="round" stroke-linecap="round"/>
<path d="M415.0 725.0 L418.0 740.0" fill="none" stroke="#f4cb86" stroke-width="1.7" stroke-linejoin="round" stroke-linecap="round"/>
<path d="M425.0 723.0 L431.9 737.0" fill="none" stroke="#f4cb86" stroke-width="1.7" stroke-linejoin="round" stroke-linecap="round"/>
<path d="M450.0 726.0 L452.0 745.0 L450.7 753.0 L448.0 770.0 L452.0 790.0" fill="none" stroke="#f4cb86" stroke-width="1.7" stroke-linejoin="round" stroke-linecap="round"/>
<path d="M469.6 724.9 L470.0 745.0 L475.0 760.0 L490.0 765.0" fill="none" stroke="#f4cb86" stroke-width="1.7" stroke-linejoin="round" stroke-linecap="round"/>
<path d="M440.0 760.0 L460.0 765.4" fill="none" stroke="#f4cb86" stroke-width="1.7" stroke-linejoin="round" stroke-linecap="round"/>
<path d="M410.0 765.0 L425.0 770.0 L440.0 775.0" fill="none" stroke="#f4cb86" stroke-width="1.7" stroke-linejoin="round" stroke-linecap="round"/>
<path d="M470.0 780.0 L485.0 785.0 L497.0 783.0" fill="none" stroke="#f4cb86" stroke-width="1.7" stroke-linejoin="round" stroke-linecap="round"/>
<path d="M335.0 760.0 L345.0 775.0 L348.0 803.0" fill="none" stroke="#f4cb86" stroke-width="1.7" stroke-linejoin="round" stroke-linecap="round"/>
<path d="M482.0 722.0 L500.0 728.0 L512.9 737.0" fill="none" stroke="#f4cb86" stroke-width="1.7" stroke-linejoin="round" stroke-linecap="round"/>
<path d="M500.0 745.0 L512.9 753.0 L518.0 760.0" fill="none" stroke="#f4cb86" stroke-width="1.7" stroke-linejoin="round" stroke-linecap="round"/>
<path d="M420.0 790.0 L440.0 795.0 L452.0 790.0" fill="none" stroke="#f4cb86" stroke-width="1.7" stroke-linejoin="round" stroke-linecap="round"/>
<path d="M365.0 728.0 L381.0 731.4 L392.0 722.0" fill="none" stroke="#f4cb86" stroke-width="1.7" stroke-linejoin="round" stroke-linecap="round"/>
<path d="M313.8 735.2L685 695.2" stroke="#a9a4b6" stroke-width="4" fill="none"/>
<rect x="668" y="682" width="17" height="12" fill="#e9e6e2"/>
<text x="72.5" y="144.3" font-size="18" textLength="88.2" lengthAdjust="spacingAndGlyphs" fill="#222" stroke="#fff" stroke-width="2.6" stroke-linejoin="round" paint-order="stroke" stroke-opacity=".9">Oceanside</text>
<text x="201.0" y="140.5" font-size="18" textLength="39.5" lengthAdjust="spacingAndGlyphs" fill="#222" stroke="#fff" stroke-width="2.6" stroke-linejoin="round" paint-order="stroke" stroke-opacity=".9">Vista</text>
<text x="299.3" y="211.7" font-size="18" textLength="86.3" lengthAdjust="spacingAndGlyphs" fill="#222" stroke="#fff" stroke-width="2.6" stroke-linejoin="round" paint-order="stroke" stroke-opacity=".9">Escondido</text>
<text x="238.4" y="576.6" font-size="18" textLength="84.8" lengthAdjust="spacingAndGlyphs" fill="#2a2a2a" stroke="#fff" stroke-width="2" stroke-opacity=".45" paint-order="stroke">San Diego</text>
<text x="286.4" y="610.9" font-size="13.8" textLength="85.8" lengthAdjust="spacingAndGlyphs" fill="#333" stroke="#fff" stroke-width="2.6" stroke-linejoin="round" paint-order="stroke" stroke-opacity=".9">National City</text>
<text x="294.0" y="646.7" font-size="18" textLength="93.2" lengthAdjust="spacingAndGlyphs" fill="#222" stroke="#fff" stroke-width="2.6" stroke-linejoin="round" paint-order="stroke" stroke-opacity=".9">Chula Vista</text>
<text x="401.7" y="771.0" font-size="18" textLength="59.9" lengthAdjust="spacingAndGlyphs" fill="#222" stroke="#fff" stroke-width="2.6" stroke-linejoin="round" paint-order="stroke" stroke-opacity=".9">Tijuana</text>
<text x="552.3" y="763.8" font-size="13.7" textLength="102.5" lengthAdjust="spacingAndGlyphs" fill="#333" stroke="#fff" stroke-width="2.6" stroke-linejoin="round" paint-order="stroke" stroke-opacity=".9">Villa del Campo</text>
<text x="658" y="713.2" font-size="18" fill="#222" stroke="#fff" stroke-width="2.6" stroke-linejoin="round" paint-order="stroke" stroke-opacity=".9">Tecate</text>
<text x="675.6" y="769" font-size="13.7" fill="#333" stroke="#fff" stroke-width="2.6" stroke-linejoin="round" paint-order="stroke" stroke-opacity=".9">Nueva</text>
<g><path d="M340.3 233.9Q349.3 234.8 358.3 233.9L358.3 239.9Q357.5 246.3 349.3 250.7Q341.1 246.3 340.3 239.9Z" fill="#fff" stroke="#55536f" stroke-width="1.2" stroke-linejoin="round"/><path d="M340.3 233.9Q349.3 234.8 358.3 233.9L358.3 236.6L340.3 236.6Z" fill="#55536f"/><text x="349.3" y="245.8" font-size="10.6" text-anchor="middle" fill="#111" font-family="'Liberation Sans',sans-serif">15</text></g>
<g><path d="M426.0 484.1Q435.0 485.0 444.0 484.1L444.0 490.1Q443.2 496.5 435.0 500.9Q426.8 496.5 426.0 490.1Z" fill="#fff" stroke="#55536f" stroke-width="1.2" stroke-linejoin="round"/><path d="M426.0 484.1Q435.0 485.0 444.0 484.1L444.0 486.8L426.0 486.8Z" fill="#55536f"/><text x="435.0" y="496.0" font-size="10.6" text-anchor="middle" fill="#111" font-family="'Liberation Sans',sans-serif">8</text></g>
<g><path d="M365.5 660.0Q376.0 660.9 386.5 660.0L386.5 666.0Q385.7 672.3 376.0 676.5Q366.3 672.3 365.5 666.0Z" fill="#fff" stroke="#55536f" stroke-width="1.2" stroke-linejoin="round"/><path d="M365.5 660.0Q376.0 660.9 386.5 660.0L386.5 662.8L365.5 662.8Z" fill="#55536f"/><text x="376.0" y="671.8" font-size="10.2" text-anchor="middle" fill="#111" font-family="'Liberation Sans',sans-serif">805</text></g>
<g><path d="M214.7 375.3Q223.7 376.2 232.7 375.3L232.7 381.3Q231.9 387.7 223.7 392.1Q215.5 387.7 214.7 381.3Z" fill="#fff" stroke="#55536f" stroke-width="1.2" stroke-linejoin="round"/><path d="M214.7 375.3Q223.7 376.2 232.7 375.3L232.7 378.0L214.7 378.0Z" fill="#55536f"/><text x="223.7" y="387.2" font-size="10.6" text-anchor="middle" fill="#111" font-family="'Liberation Sans',sans-serif">5</text></g>
<g><path d="M254.5 435.4Q265.0 436.3 275.5 435.4L275.5 441.4Q274.7 447.7 265.0 451.9Q255.3 447.7 254.5 441.4Z" fill="#fff" stroke="#55536f" stroke-width="1.2" stroke-linejoin="round"/><path d="M254.5 435.4Q265.0 436.3 275.5 435.4L275.5 438.1L254.5 438.1Z" fill="#55536f"/><text x="265.0" y="447.2" font-size="10.2" text-anchor="middle" fill="#111" font-family="'Liberation Sans',sans-serif">805</text></g>
<g><path d="M303.5 452.6Q312.5 453.5 321.5 452.6L321.5 458.6Q320.7 465.0 312.5 469.4Q304.3 465.0 303.5 458.6Z" fill="#fff" stroke="#55536f" stroke-width="1.2" stroke-linejoin="round"/><path d="M303.5 452.6Q312.5 453.5 321.5 452.6L321.5 455.3L303.5 455.3Z" fill="#55536f"/><text x="312.5" y="464.5" font-size="10.6" text-anchor="middle" fill="#111" font-family="'Liberation Sans',sans-serif">15</text></g>
<g><path d="M332.0 688.1Q341.0 689.0 350.0 688.1L350.0 694.1Q349.2 700.5 341.0 704.9Q332.8 700.5 332.0 694.1Z" fill="#fff" stroke="#55536f" stroke-width="1.2" stroke-linejoin="round"/><path d="M332.0 688.1Q341.0 689.0 350.0 688.1L350.0 690.8L332.0 690.8Z" fill="#55536f"/><text x="341.0" y="700.0" font-size="10.6" text-anchor="middle" fill="#111" font-family="'Liberation Sans',sans-serif">5</text></g>
<rect x="494" y="721.3" width="41.3" height="13.9" rx="1.5" fill="#fff" stroke="#777" stroke-width="1"/><text x="514.6" y="732.6" font-size="10.4" text-anchor="middle" fill="#111" font-family="'Liberation Sans',sans-serif" textLength="35.3" lengthAdjust="spacingAndGlyphs">MEX 2D</text>
<rect x="294.6" y="785.2" width="41.2" height="12.6" rx="1.5" fill="#fff" stroke="#777" stroke-width="1"/><text x="315.2" y="795.2" font-size="10.4" text-anchor="middle" fill="#111" font-family="'Liberation Sans',sans-serif" textLength="35.2" lengthAdjust="spacingAndGlyphs">MEX 1D</text>
<polygon points="275.4,330.0 275.4,308.3 288.5,308.3 288.5,295.0 313.0,294.2 309.3,314.0 330.0,315.9 330.0,304.6 335.6,271.6 328.0,262.0 316.8,256.5 318.7,264.0 313.0,274.4 304.6,275.4 313.0,266.0 315.0,249.0 317.7,243.3 330.0,254.6 338.5,262.2 341.3,256.5 350.7,258.4 356.4,253.7 364.0,260.3 373.3,258.4 375.2,254.6 368.6,252.7 373.3,247.0 380.9,235.8 386.5,233.9 387.5,228.3 385.6,220.7 394.0,212.0 399.0,214.0 399.7,221.7 405.4,217.0 418.5,217.0 419.5,218.8 430.8,218.8 431.7,230.0 437.4,225.4 448.7,225.4 448.7,229.2 456.0,229.0 456.0,233.0 475.0,233.0 476.0,238.0 469.0,239.0 469.0,242.0 444.9,242.4 444.9,229.2 441.0,229.2 439.3,240.5 426.0,242.4 425.0,246.0 418.5,250.9 412.9,250.9 412.0,248.0 389.3,249.0 381.8,254.6 386.5,258.4 380.9,266.9 376.0,267.8 369.6,282.9 364.0,296.0 360.0,316.8 354.5,320.6 353.5,346.0 340.4,346.0 341.3,358.0 347.0,361.0 353.5,367.7 353.5,379.0 360.0,380.0 377.0,379.0 394.0,370.5 403.5,364.9 418.5,367.7 417.6,374.0 412.0,374.0 412.0,386.0 362.0,386.5 365.8,390.0 360.0,402.5 343.0,408.0 332.0,413.0 330.0,416.7 320.6,413.0 317.7,407.0 316.8,386.5 321.5,364.9 317.7,365.8 313.0,354.5 288.5,355.4 274.4,353.5 273.5,349.0 276.3,348.0" fill="#fcface" fill-opacity="0.82" stroke="#2f7b6b" stroke-width="1.1" stroke-linejoin="round"/>
<polygon points="209.4,330.0 215.0,328.0 222.6,328.0 223.5,331.0 234.0,329.0 254.6,328.0 250.0,334.7 252.7,338.5 268.8,339.4 269.7,342.2 276.3,342.2 276.3,348.0 273.5,349.0 274.4,353.5 286.7,355.4 287.5,360.0 276.0,369.0 275.0,376.0 250.0,390.0 239.0,404.0 250.0,415.0 269.0,420.0 271.0,426.0 260.0,430.0 269.0,452.5 241.0,455.0 240.0,459.0 227.0,460.7 230.9,478.6 203.5,486.0 198.0,482.0 192.5,475.0 190.5,462.5 194.0,451.0 205.0,447.5 212.5,430.0 211.0,405.0 205.0,370.0 207.5,367.5 206.0,362.5 209.0,357.5" fill="#fbe5a2" fill-opacity="0.82" stroke="#2f7b6b" stroke-width="1.1" stroke-linejoin="round"/>
<polygon points="286.7,355.4 313.0,354.5 317.7,365.8 321.5,364.9 316.8,386.5 317.7,407.0 320.6,413.0 322.5,424.0 320.6,437.0 315.0,454.0 313.0,465.6 316.6,486.0 287.4,485.2 284.6,493.7 274.2,490.9 263.0,500.3 259.0,487.0 252.5,484.3 248.8,471.0 242.2,468.3 240.3,458.8 241.0,455.0 269.0,452.5 260.0,430.0 271.0,426.0 269.0,420.0 250.0,415.0 239.0,404.0 250.0,390.0 275.0,376.0 276.0,369.0 287.5,360.0" fill="#f8dd96" fill-opacity="0.82" stroke="#2f7b6b" stroke-width="1.1" stroke-linejoin="round"/>
<polygon points="320.6,413.0 330.0,416.7 332.0,413.0 343.0,408.0 360.0,402.5 365.8,390.0 362.0,386.5 412.0,386.0 413.0,399.7 415.7,400.6 415.7,405.0 411.0,409.0 399.7,431.7 394.0,437.4 396.0,446.8 390.0,454.0 388.4,460.0 399.7,458.0 399.7,462.0 376.0,462.6 376.0,465.4 399.5,482.4 398.5,503.0 376.0,504.0 376.9,506.0 365.6,515.4 368.4,519.0 356.0,514.4 330.7,513.5 318.5,515.4 305.3,521.0 305.3,523.8 296.8,524.8 281.7,531.4 265.7,532.3 249.7,530.4 264.8,523.0 266.7,515.4 263.0,500.3 274.2,490.9 284.6,493.7 287.4,485.2 316.6,486.0 313.0,465.6 315.0,454.0 320.6,437.0 322.5,424.0" fill="#f9e5a3" fill-opacity="0.82" stroke="#2f7b6b" stroke-width="1.1" stroke-linejoin="round"/>
<polygon points="363.7,535.0 366.5,536.0 366.5,549.3 356.0,558.7 365.6,556.8 367.5,569.4 379.7,565.7 383.5,569.4 390.0,575.0 387.2,594.0 370.3,612.8 355.2,618.4 350.5,609.0 355.2,605.0 354.3,594.9 342.0,592.0 331.7,594.9 331.7,589.0 325.0,588.0 322.2,578.8 328.8,578.0 324.0,571.3 328.8,568.0 340.0,547.4 353.3,538.0" fill="#f8d985" fill-opacity="0.82" stroke="#2f7b6b" stroke-width="1.1" stroke-linejoin="round"/>
<polygon points="278.0,579.4 281.7,581.3 292.0,579.4 293.0,572.8 311.9,570.4 313.8,590.0 327.0,594.9 325.0,597.7 304.3,600.5 300.6,609.0 285.5,594.9 281.7,590.0 274.2,584.5 274.2,582.2" fill="#f7da81" fill-opacity="0.82" stroke="#2f7b6b" stroke-width="1.1" stroke-linejoin="round"/>
<polygon points="315.6,671.0 330.7,673.0 335.4,672.0 337.3,679.5 340.0,680.5 341.0,684.0 360.0,684.0 360.0,687.5 363.3,687.5 363.3,684.0 367.0,684.0 367.0,687.5 369.6,687.5 369.6,684.0 376.4,684.0 376.4,687.5 379.5,687.5 379.5,684.0 392.9,684.0 393.8,690.9 402.3,691.8 404.2,694.6 430.6,690.0 440.6,688.9 440.6,702.4 452.0,703.4 453.0,711.8 458.3,711.8 458.3,720.0 313.8,734.6 314.7,714.4 327.0,713.5 327.9,705.0 326.0,691.8 324.0,687.0 314.7,684.3" fill="#f7d97f" fill-opacity="0.82" stroke="#2f7b6b" stroke-width="1.1" stroke-linejoin="round"/>
<polygon points="318.5,515.4 330.7,513.5 356.0,514.4 368.4,519.0 374.0,523.0 363.7,526.7 363.7,535.0 353.3,538.0 340.0,547.4 328.8,568.0 324.0,571.3 328.8,578.0 322.2,578.8 325.0,588.0 331.7,589.0 331.7,594.9 327.0,594.9 313.8,590.0 311.9,570.4 316.6,570.0 319.4,555.0 310.0,537.0 321.3,535.0" fill="#ed8252" fill-opacity="0.9" stroke="#2f7b6b" stroke-width="1.1" stroke-linejoin="round"/>
<polygon points="227.0,460.7 240.3,458.8 242.2,468.3 248.8,471.0 252.5,484.3 259.0,487.0 263.0,500.3 266.7,515.4 264.8,523.0 249.7,530.4 255.4,538.0 268.5,549.3 274.2,558.7 270.4,564.3 272.3,571.9 278.0,579.4 274.2,582.2 261.0,575.6 257.2,571.9 249.7,570.0 236.5,583.2 231.8,591.0 233.7,596.7 242.2,594.9 257.2,596.7 250.6,607.0 224.3,610.9 220.5,616.5 218.6,609.0 211.0,578.8 208.3,562.5 212.0,534.2 209.2,502.2 203.5,486.0 230.9,478.6" fill="#e04d35" fill-opacity="0.86" stroke="#2f7b6b" stroke-width="1.1" stroke-linejoin="round"/>
<polygon points="249.7,530.4 265.7,532.3 281.7,531.4 296.8,524.8 305.3,523.8 305.3,521.0 318.5,515.4 321.3,535.0 310.0,537.0 319.4,555.0 316.6,570.0 293.0,572.8 292.0,579.4 281.7,581.3 278.0,579.4 272.3,571.9 270.4,564.3 274.2,558.7 268.5,549.3 255.4,538.0" fill="#822547" fill-opacity="0.9" stroke="#2f7b6b" stroke-width="1.1" stroke-linejoin="round"/>
<path d="M300.6 609.0 L306.0 640.0 L311.9 669.3 L315.6 671.0" fill="none" stroke="#2f7b6b" stroke-width="1.3"/>
<polygon points="214.5,505.0 218.0,501.0 222.0,503.0 224.0,509.0 227.0,502.0 231.0,500.5 233.0,505.0 237.0,501.0 241.0,503.0 240.0,509.0 244.0,512.0 242.0,518.0 238.0,517.0 236.0,523.0 231.0,524.0 228.0,519.0 224.0,523.0 219.0,521.0 220.0,515.0 215.0,512.0" fill="#b8443f" opacity=".3"/>
<polygon points="226.0,569.0 233.0,566.0 238.0,574.0 236.5,583.2 231.8,591.0 233.7,596.7 242.2,594.9 257.2,596.7 250.6,607.0 226.0,610.5 222.5,600.0 224.0,585.0" fill="#b8443f" opacity=".22"/>
<path d="M234.8 481.5 L244.0 495.8 L247.0 522.3 L244.0 540.7 L233.8 559.0" fill="none" stroke="#f58a60" stroke-opacity=".55" stroke-width="1.8" stroke-linejoin="round" stroke-linecap="round"/>
<path d="M217.4 522.3 L227.6 532.5 L250.0 534.6" fill="none" stroke="#f58a60" stroke-opacity=".55" stroke-width="1.8" stroke-linejoin="round" stroke-linecap="round"/>
<path d="M227.6 532.5 L250.0 544.8 L262.0 552.0" fill="none" stroke="#f58a60" stroke-opacity=".55" stroke-width="1.8" stroke-linejoin="round" stroke-linecap="round"/>
<text x="238.4" y="576.6" font-size="18" textLength="84.8" lengthAdjust="spacingAndGlyphs" fill="#2b1010" fill-opacity=".28">San Diego</text>
</svg>
<div class="mapbtn" style="left:19px;top:142px;width:34px;height:68px"></div>
<div class="mapbtn" style="left:19px;top:219px;width:34px;height:33px"></div>
<div class="mapbtn" style="left:19px;top:261px;width:34px;height:34px"></div>
<div class="mapbtn" style="left:639px;top:142px;width:34px;height:34px"></div>
<svg class="abs" style="left:19px;top:142px" width="34" height="153" viewBox="0 0 34 153" fill="none" stroke="#1f2330" stroke-width="1.3" stroke-linecap="round">
<circle cx="16.7" cy="17.2" r="7.6" fill="#2a2e3a" stroke="none"/><path d="M12.6 17.2h8.2M16.7 13.1v8.2" stroke="#fff" stroke-width="1.5"/>
<circle cx="16.7" cy="50.7" r="7.6" fill="#2a2e3a" stroke="none"/><path d="M12.6 50.7h8.2" stroke="#fff" stroke-width="1.5"/>
<circle cx="16.8" cy="93.4" r="6.3" stroke-dasharray="7.20 2.7" stroke-dashoffset="8.55" stroke-width="1.05" stroke-linecap="butt" stroke="#343741"/><circle cx="16.8" cy="93.4" r="1" fill="#343741" stroke="none"/><path d="M16.8 85.6v4.6M16.8 96.6v4.6M9 93.4h4.6M20 93.4h4.6" stroke-width="1.05" stroke="#343741" stroke-linecap="butt"/>
<g transform="translate(17 136) rotate(-45)" stroke-width="1.25" stroke-linejoin="round"><path d="M-2.2 -8.4v3.6l2.2 1.3 2.2-1.3v-3.6a4.6 4.6 0 0 1 .5 8.1v6.9a2.7 2.7 0 0 1-5.4 0v-6.9a4.6 4.6 0 0 1 .5-8.1z"/><circle cx="0" cy="6.3" r=".7" fill="#1f2330" stroke="none"/></g>
</svg>
<svg class="abs" style="left:639px;top:142px" width="34" height="34" viewBox="0 0 34 34" fill="none" stroke="#1f2330" stroke-width="1.3" stroke-linecap="round" stroke-linejoin="round"><path d="M9.4 16.8h14.3M15.4 12.5h8.3M15.4 21.1h8.3" stroke-width="1.5"/><path d="M12.6 13.4L9.2 16.8l3.4 3.4" stroke-width="1.3"/></svg>
<div class="abs" style="left:265.7px;top:774.5px;font-size:11.2px;font-weight:700;color:#1a1c21;white-space:nowrap;letter-spacing:.06px" id="attr">Elastic Maps Service, MapTiler, OpenMapTiles, OpenStreetMap contributors</div>

<svg class="heat" width="680" height="345" viewBox="696 104 680 345">
<rect x="735.3" y="148.40" width="630.0" height="10.17" fill="#f8fcf6"/>
<rect x="735.3" y="158.53" width="630.0" height="10.17" fill="#f8fcf6"/>
<rect x="735.3" y="168.65" width="630.0" height="10.17" fill="#f8fcf6"/>
<rect x="735.3" y="178.78" width="630.0" height="10.17" fill="#f8fcf6"/>
<rect x="735.3" y="188.90" width="630.0" height="10.17" fill="#f8fcf6"/>
<rect x="735.3" y="199.03" width="630.0" height="10.17" fill="#f8fcf6"/>
<rect x="735.3" y="209.15" width="450.0" height="10.17" fill="#cde8c5"/>
<rect x="1185.3" y="209.15" width="180.0" height="10.17" fill="#f8fcf6"/>
<rect x="735.3" y="219.27" width="450.0" height="10.17" fill="#87c17e"/>
<rect x="1185.3" y="219.27" width="180.0" height="10.17" fill="#cde8c5"/>
<rect x="735.3" y="229.40" width="450.0" height="10.17" fill="#44894c"/>
<rect x="1185.3" y="229.40" width="180.0" height="10.17" fill="#cde8c5"/>
<rect x="735.3" y="239.52" width="450.0" height="10.17" fill="#44894c"/>
<rect x="1185.3" y="239.52" width="90.0" height="10.17" fill="#87c17e"/>
<rect x="1275.3" y="239.52" width="90.0" height="10.17" fill="#cde8c5"/>
<rect x="735.3" y="249.65" width="450.0" height="10.17" fill="#44894c"/>
<rect x="1185.3" y="249.65" width="90.0" height="10.17" fill="#87c17e"/>
<rect x="1275.3" y="249.65" width="90.0" height="10.17" fill="#cde8c5"/>
<rect x="735.3" y="259.77" width="450.0" height="10.17" fill="#44894c"/>
<rect x="1185.3" y="259.77" width="90.0" height="10.17" fill="#87c17e"/>
<rect x="1275.3" y="259.77" width="90.0" height="10.17" fill="#cde8c5"/>
<rect x="735.3" y="269.90" width="450.0" height="10.17" fill="#87c17e"/>
<rect x="1185.3" y="269.90" width="180.0" height="10.17" fill="#cde8c5"/>
<rect x="735.3" y="280.02" width="270.0" height="10.17" fill="#87c17e"/>
<rect x="1005.3" y="280.02" width="90.0" height="10.17" fill="#44894c"/>
<rect x="1095.3" y="280.02" width="90.0" height="10.17" fill="#87c17e"/>
<rect x="1185.3" y="280.02" width="180.0" height="10.17" fill="#cde8c5"/>
<rect x="735.3" y="290.15" width="450.0" height="10.17" fill="#87c17e"/>
<rect x="1185.3" y="290.15" width="180.0" height="10.17" fill="#cde8c5"/>
<rect x="735.3" y="300.27" width="450.0" height="10.17" fill="#87c17e"/>
<rect x="1185.3" y="300.27" width="180.0" height="10.17" fill="#cde8c5"/>
<rect x="735.3" y="310.40" width="360.0" height="10.17" fill="#44894c"/>
<rect x="1095.3" y="310.40" width="90.0" height="10.17" fill="#87c17e"/>
<rect x="1185.3" y="310.40" width="180.0" height="10.17" fill="#cde8c5"/>
<rect x="735.3" y="320.52" width="450.0" height="10.17" fill="#87c17e"/>
<rect x="1185.3" y="320.52" width="180.0" height="10.17" fill="#cde8c5"/>
<rect x="735.3" y="330.65" width="270.0" height="10.17" fill="#87c17e"/>
<rect x="1005.3" y="330.65" width="360.0" height="10.17" fill="#cde8c5"/>
<rect x="735.3" y="340.77" width="630.0" height="10.17" fill="#cde8c5"/>
<rect x="735.3" y="350.90" width="360.0" height="10.17" fill="#cde8c5"/>
<rect x="1095.3" y="350.90" width="270.0" height="10.17" fill="#f8fcf6"/>
<rect x="735.3" y="361.02" width="630.0" height="10.17" fill="#f8fcf6"/>
<rect x="735.3" y="371.15" width="630.0" height="10.17" fill="#f8fcf6"/>
<rect x="735.3" y="381.27" width="630.0" height="10.17" fill="#f8fcf6"/>
<rect x="735.3" y="158.03" width="630.0" height="1" fill="#000" fill-opacity="0.22"/>
<rect x="735.3" y="168.15" width="630.0" height="1" fill="#000" fill-opacity="0.22"/>
<rect x="735.3" y="178.28" width="630.0" height="1" fill="#000" fill-opacity="0.22"/>
<rect x="735.3" y="188.40" width="630.0" height="1" fill="#000" fill-opacity="0.22"/>
<rect x="735.3" y="198.53" width="630.0" height="1" fill="#000" fill-opacity="0.22"/>
<rect x="735.3" y="208.65" width="630.0" height="1" fill="#000" fill-opacity="0.22"/>
<rect x="735.3" y="218.77" width="630.0" height="1" fill="#000" fill-opacity="0.22"/>
<rect x="735.3" y="228.90" width="630.0" height="1" fill="#000" fill-opacity="0.22"/>
<rect x="735.3" y="239.02" width="630.0" height="1" fill="#000" fill-opacity="0.22"/>
<rect x="735.3" y="249.15" width="630.0" height="1" fill="#000" fill-opacity="0.22"/>
<rect x="735.3" y="259.27" width="630.0" height="1" fill="#000" fill-opacity="0.22"/>
<rect x="735.3" y="269.40" width="630.0" height="1" fill="#000" fill-opacity="0.22"/>
<rect x="735.3" y="279.52" width="630.0" height="1" fill="#000" fill-opacity="0.22"/>
<rect x="735.3" y="289.65" width="630.0" height="1" fill="#000" fill-opacity="0.22"/>
<rect x="735.3" y="299.77" width="630.0" height="1" fill="#000" fill-opacity="0.22"/>
<rect x="735.3" y="309.90" width="630.0" height="1" fill="#000" fill-opacity="0.22"/>
<rect x="735.3" y="320.02" width="630.0" height="1" fill="#000" fill-opacity="0.22"/>
<rect x="735.3" y="330.15" width="630.0" height="1" fill="#000" fill-opacity="0.22"/>
<rect x="735.3" y="340.27" width="630.0" height="1" fill="#000" fill-opacity="0.22"/>
<rect x="735.3" y="350.40" width="630.0" height="1" fill="#000" fill-opacity="0.22"/>
<rect x="735.3" y="360.52" width="630.0" height="1" fill="#000" fill-opacity="0.22"/>
<rect x="735.3" y="370.65" width="630.0" height="1" fill="#000" fill-opacity="0.22"/>
<rect x="735.3" y="380.77" width="630.0" height="1" fill="#000" fill-opacity="0.22"/>
<rect x="824.8" y="148.4" width="1.1" height="243.0" fill="#000" fill-opacity="0.2"/>
<rect x="914.8" y="148.4" width="1.1" height="243.0" fill="#000" fill-opacity="0.2"/>
<rect x="1004.8" y="148.4" width="1.1" height="243.0" fill="#000" fill-opacity="0.2"/>
<rect x="1094.8" y="148.4" width="1.1" height="243.0" fill="#000" fill-opacity="0.2"/>
<rect x="1184.8" y="148.4" width="1.1" height="243.0" fill="#000" fill-opacity="0.2"/>
<rect x="1274.8" y="148.4" width="1.1" height="243.0" fill="#000" fill-opacity="0.2"/>
<path d="M729 148.4H735.3V391.4" fill="none" stroke="#ddd" stroke-width="1"/>
<path d="M729 391.4H1365.3" fill="none" stroke="#ddd" stroke-width="1"/>
<path d="M729 153.46H735.3" stroke="#ddd" stroke-width="1"/>
<text x="725.5" y="157.46" text-anchor="end" class="yt">0</text>
<path d="M729 163.59H735.3" stroke="#ddd" stroke-width="1"/>
<text x="725.5" y="167.59" text-anchor="end" class="yt">1</text>
<path d="M729 173.71H735.3" stroke="#ddd" stroke-width="1"/>
<text x="725.5" y="177.71" text-anchor="end" class="yt">2</text>
<path d="M729 183.84H735.3" stroke="#ddd" stroke-width="1"/>
<text x="725.5" y="187.84" text-anchor="end" class="yt">3</text>
<path d="M729 193.96H735.3" stroke="#ddd" stroke-width="1"/>
<text x="725.5" y="197.96" text-anchor="end" class="yt">4</text>
<path d="M729 204.09H735.3" stroke="#ddd" stroke-width="1"/>
<text x="725.5" y="208.09" text-anchor="end" class="yt">5</text>
<path d="M729 214.21H735.3" stroke="#ddd" stroke-width="1"/>
<text x="725.5" y="218.21" text-anchor="end" class="yt">6</text>
<path d="M729 224.34H735.3" stroke="#ddd" stroke-width="1"/>
<text x="725.5" y="228.34" text-anchor="end" class="yt">7</text>
<path d="M729 234.46H735.3" stroke="#ddd" stroke-width="1"/>
<text x="725.5" y="238.46" text-anchor="end" class="yt">8</text>
<path d="M729 244.59H735.3" stroke="#ddd" stroke-width="1"/>
<text x="725.5" y="248.59" text-anchor="end" class="yt">9</text>
<path d="M729 254.71H735.3" stroke="#ddd" stroke-width="1"/>
<text x="725.5" y="258.71" text-anchor="end" class="yt">10</text>
<path d="M729 264.84H735.3" stroke="#ddd" stroke-width="1"/>
<text x="725.5" y="268.84" text-anchor="end" class="yt">11</text>
<path d="M729 274.96H735.3" stroke="#ddd" stroke-width="1"/>
<text x="725.5" y="278.96" text-anchor="end" class="yt">12</text>
<path d="M729 285.09H735.3" stroke="#ddd" stroke-width="1"/>
<text x="725.5" y="289.09" text-anchor="end" class="yt">13</text>
<path d="M729 295.21H735.3" stroke="#ddd" stroke-width="1"/>
<text x="725.5" y="299.21" text-anchor="end" class="yt">14</text>
<path d="M729 305.34H735.3" stroke="#ddd" stroke-width="1"/>
<text x="725.5" y="309.34" text-anchor="end" class="yt">15</text>
<path d="M729 315.46H735.3" stroke="#ddd" stroke-width="1"/>
<text x="725.5" y="319.46" text-anchor="end" class="yt">16</text>
<path d="M729 325.59H735.3" stroke="#ddd" stroke-width="1"/>
<text x="725.5" y="329.59" text-anchor="end" class="yt">17</text>
<path d="M729 335.71H735.3" stroke="#ddd" stroke-width="1"/>
<text x="725.5" y="339.71" text-anchor="end" class="yt">18</text>
<path d="M729 345.84H735.3" stroke="#ddd" stroke-width="1"/>
<text x="725.5" y="349.84" text-anchor="end" class="yt">19</text>
<path d="M729 355.96H735.3" stroke="#ddd" stroke-width="1"/>
<text x="725.5" y="359.96" text-anchor="end" class="yt">20</text>
<path d="M729 366.09H735.3" stroke="#ddd" stroke-width="1"/>
<text x="725.5" y="370.09" text-anchor="end" class="yt">21</text>
<path d="M729 376.21H735.3" stroke="#ddd" stroke-width="1"/>
<text x="725.5" y="380.21" text-anchor="end" class="yt">22</text>
<path d="M729 386.34H735.3" stroke="#ddd" stroke-width="1"/>
<text x="725.5" y="390.34" text-anchor="end" class="yt">23</text>
<path d="M735.3 391.4v6" stroke="#ddd" stroke-width="1"/>
<path d="M1365.3 391.4v6" stroke="#ddd" stroke-width="1"/>
<path d="M780.3 391.4v6" stroke="#ddd" stroke-width="1"/>
<text transform="translate(783.9 400.6) rotate(-90)" text-anchor="end" class="xt">1</text>
<path d="M870.3 391.4v6" stroke="#ddd" stroke-width="1"/>
<text transform="translate(873.9 400.6) rotate(-90)" text-anchor="end" class="xt">2</text>
<path d="M960.3 391.4v6" stroke="#ddd" stroke-width="1"/>
<text transform="translate(963.9 400.6) rotate(-90)" text-anchor="end" class="xt">3</text>
<path d="M1050.3 391.4v6" stroke="#ddd" stroke-width="1"/>
<text transform="translate(1053.9 400.6) rotate(-90)" text-anchor="end" class="xt">4</text>
<path d="M1140.3 391.4v6" stroke="#ddd" stroke-width="1"/>
<text transform="translate(1143.9 400.6) rotate(-90)" text-anchor="end" class="xt">5</text>
<path d="M1230.3 391.4v6" stroke="#ddd" stroke-width="1"/>
<text transform="translate(1233.9 400.6) rotate(-90)" text-anchor="end" class="xt">6</text>
<path d="M1320.3 391.4v6" stroke="#ddd" stroke-width="1"/>
<text transform="translate(1323.9 400.6) rotate(-90)" text-anchor="end" class="xt">7</text>
<text x="1049.7" y="423.3" text-anchor="middle" class="xl">day of week</text>
</svg>
<div class="cloud">
<span style="left:957.2px;top:521.1px;font-size:23.35px;color:#b03fb9">Missed Collection</span>
<span style="left:977.0px;top:550.5px;font-size:36.09px;color:#6a7fd4">Illegal Dumping</span>
<span style="left:770.7px;top:573.1px;font-size:26.55px;color:#4a2bb0">Graffiti Removal</span>
<span style="left:888.5px;top:611.4px;font-size:38.20px;color:#66bb78">72 Hour Violation</span>
<span style="left:1197.7px;top:623.1px;font-size:12.64px;color:#b72aa6">Traffic Sign - Maintain</span>
<span style="left:763.3px;top:652.5px;font-size:14.84px;color:#b03c30">Sidewalk Repair Issue</span>
<span style="left:974.9px;top:658.9px;font-size:12.81px;color:#2f9a94">Dead Animal</span>
<span style="left:1064.7px;top:654.1px;font-size:22.32px;color:#8e2121">Pothole</span>
<span style="left:1165.5px;top:652.7px;font-size:12.75px;color:#67ae2c">Street Light Out</span>
<span style="left:779.9px;top:683.5px;font-size:18.00px;color:#2634a8">Parking Zone Violation</span>
<span style="left:978.7px;top:684.4px;font-size:22.02px;color:#d99a52">Other</span>
<span style="left:1056.8px;top:687.5px;font-size:19.04px;color:#b8a737">Shared Mobility Device</span>
<span style="left:905.0px;top:723.1px;font-size:13.77px;color:#38a3bb">Potential Missed Collection</span>
<span style="left:989.2px;top:746.6px;font-size:12.70px;color:#3db53d">Traffic Signal Timing Issue</span>
</div>

</body>
</html>
